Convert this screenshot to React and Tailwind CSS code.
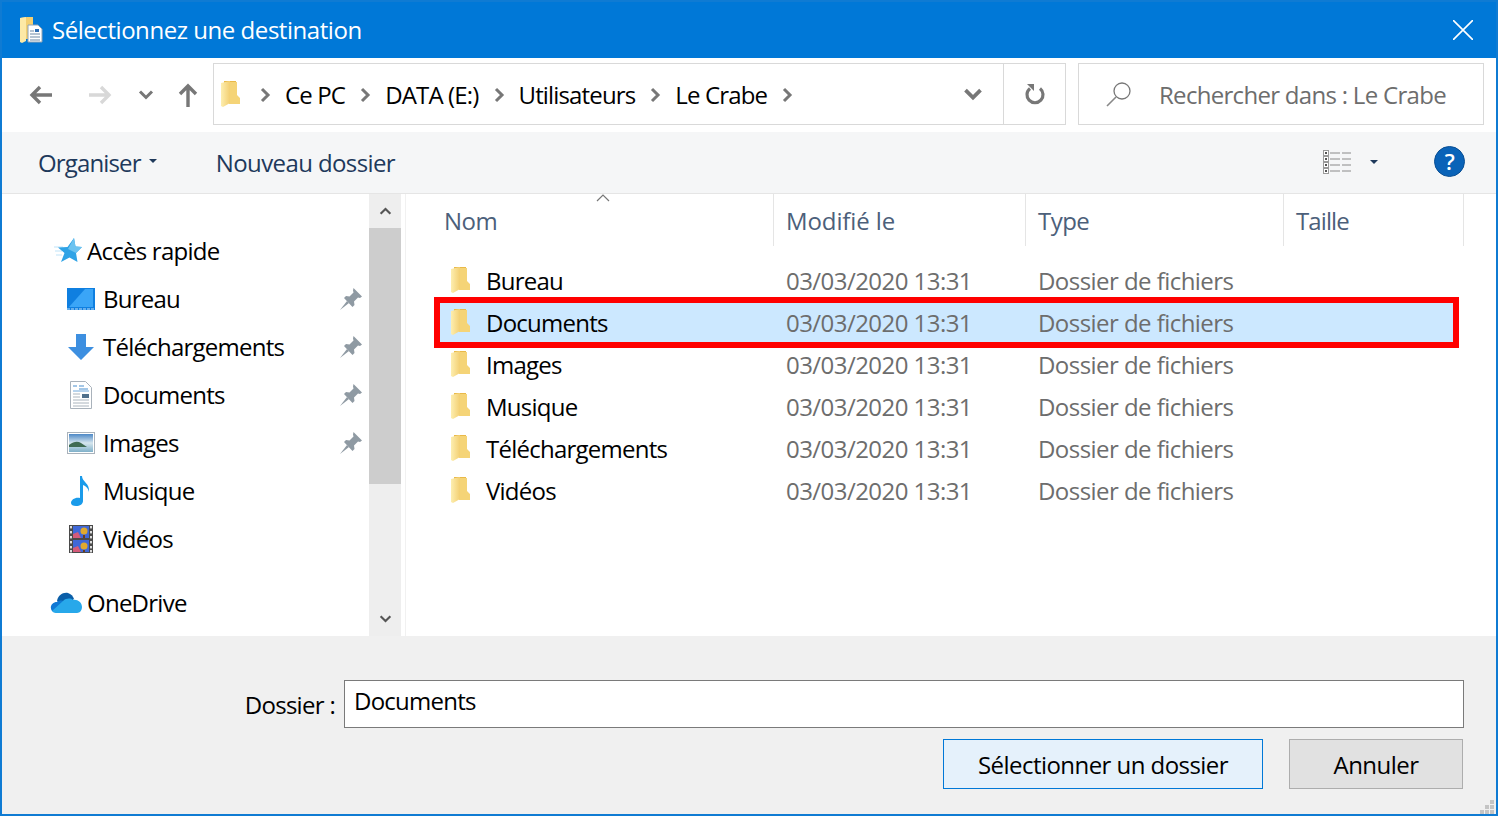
import { useId } from "react";

const font = { fontFamily: '"Open Sans", "Noto Sans", sans-serif' };

const quick = [
  { label: "Bureau", Icon: DesktopIcon, pin: true },
  { label: "Téléchargements", Icon: DownloadIcon, pin: true },
  { label: "Documents", Icon: DocIcon, pin: true },
  { label: "Images", Icon: PictureIcon, pin: true },
  { label: "Musique", Icon: NoteIcon },
  { label: "Vidéos", Icon: FilmIcon },
];

const folders = ["Bureau", "Documents", "Images", "Musique", "Téléchargements", "Vidéos"];
const crumbs = ["Ce PC", "DATA (E:)", "Utilisateurs", "Le Crabe"];

function FolderIcon({ className = "w-[22px] h-[28px]" }) {
  const id = useId();
  return (
    <svg viewBox="0 0 22 28" className={className}>
      <defs>
        <linearGradient id={id} x1="0" x2="1" y1="0" y2="0">
          <stop offset="0" stopColor="#fdeeb0" />
          <stop offset="1" stopColor="#f3cf72" />
        </linearGradient>
      </defs>
      <path d="M5 1h12v20H5z" fill="#e9b949" />
      <path d="M10 2h8v13l3 3v6H10z" fill="#f5d477" />
      <path d="M2 3l9-2v22l-7 4-2-1z" fill={`url(#${id})`} />
    </svg>
  );
}

function TitleIcon() {
  return (
    <svg viewBox="0 0 24 28" className="w-6 h-7">
      <path d="M1 2l7-1h6v22H4l-1 3-2-1z" fill="#f3cf72" />
      <path d="M1 2l6-1v24l-4 2-2-1z" fill="#fde9a6" />
      <path d="M9 9h10l4 4v13H9z" fill="#fff" stroke="#8fa2b3" />
      <path d="M11 15h4M11 18h10M11 21h10M11 24h10" stroke="#6f8aa5" strokeWidth="1.2" />
      <path d="M16 13h4v3h-4z" fill="#2f6fb5" />
    </svg>
  );
}

function ChevronGlyph({ className = "w-3 h-4" }) {
  return (
    <svg viewBox="0 0 12 16" className={className}>
      <path d="M3 2l6 6-6 6" fill="none" stroke="#777" strokeWidth="3" />
    </svg>
  );
}

function Arrow({ color, flip }) {
  return (
    <svg viewBox="0 0 24 20" className={`w-6 h-5 ${flip ? "-scale-x-100" : ""}`}>
      <path d="M11 2l-8 8 8 8M3 10h20" fill="none" stroke={color} strokeWidth="3.4" />
    </svg>
  );
}

function DownChevron({ className = "w-4 h-3", color = "#777", width = 3 }) {
  return (
    <svg viewBox="0 0 16 12" className={className}>
      <path d="M2 2.5l6 6 6-6" fill="none" stroke={color} strokeWidth={width} />
    </svg>
  );
}

function Caret({ color = "#1e395b" }) {
  return (
    <svg viewBox="0 0 8 4" className="w-2 h-1">
      <path d="M0 0h8L4 4z" fill={color} />
    </svg>
  );
}

function DetailsIcon() {
  return (
    <svg viewBox="0 0 28 26" className="w-7 h-[26px]">
      {[1, 7, 13, 19].map((y) => (
        <g key={y}>
          <rect x=".5" y={y + 0.5} width="5" height="5" fill="#fff" stroke="#9a9a9a" />
          <rect x="2" y={y + 2} width="2" height="2" fill="#555" />
          <path d={`M7 ${y + 3}h10M19 ${y + 3}h9`} stroke="#8a8a8a" strokeWidth="1" />
        </g>
      ))}
    </svg>
  );
}

function PinIcon() {
  return (
    <svg viewBox="0 0 22 22" className="w-[22px] h-[22px]">
      <path d="M13.5 0L22 8.5l-2 1.5-2-.5-4 4 .5 3.5-2 2L4 10l2-2 3.5.5 4-4-.5-2z" fill="#8f9aa3" />
      <path d="M7 13l-7 9 9-7z" fill="#8f9aa3" />
    </svg>
  );
}

function StarIcon() {
  return (
    <svg viewBox="0 0 28 26" className="w-7 h-[26px]">
      <path d="M0 9h9M1 13h7M2 17h6" stroke="#bfe3f8" strokeWidth="1" />
      <path d="M20 0l1.5 8.5L28 9l-6 6 1.5 9-8-4.5L7 24l3.5-9L4 9.5l9.5-.5z" fill="#2fa3e6" />
      <path d="M20 0l1.5 8.5L28 9l-6 6-8-4z" fill="#6cc3f0" />
    </svg>
  );
}

function DesktopIcon() {
  return (
    <svg viewBox="0 0 28 22" className="w-7 h-[22px]">
      <rect width="28" height="22" fill="#0f7fe0" />
      <path d="M2 19L18 1h8v18z" fill="#3aa5f7" />
      <path d="M0 21h28" stroke="#bfe0fa" strokeWidth="1" strokeDasharray="3 1" />
    </svg>
  );
}

function DownloadIcon() {
  return (
    <svg viewBox="0 0 26 26" className="w-[26px] h-[26px]">
      <path d="M8 0h10v13h8L13 26 0 13h8z" fill="#3d8fe0" />
    </svg>
  );
}

function DocIcon() {
  return (
    <svg viewBox="0 0 22 28" className="w-[22px] h-7">
      <path d="M.5.5h15l6 6v21H.5z" fill="#fff" stroke="#a9b2bb" />
      <path d="M3 5h4M9 5h5M9 8h9" stroke="#4a90d0" strokeWidth="1.2" />
      <path d="M3 10h16" stroke="#6fa8dc" strokeWidth="1" />
      <path d="M3 13h7M3 16h7M3 19h16M3 22h16M3 25h16" stroke="#aab4bd" strokeWidth="1" />
      <rect x="12" y="13" width="7" height="4" fill="#51718c" />
    </svg>
  );
}

function PictureIcon() {
  const id = useId();
  return (
    <svg viewBox="0 0 28 22" className="w-7 h-[22px]">
      <defs>
        <linearGradient id={id} x1="0" x2="0" y1="0" y2="1">
          <stop offset="0" stopColor="#4d88c6" />
          <stop offset=".5" stopColor="#d6e6ee" />
          <stop offset="1" stopColor="#7fb0c9" />
        </linearGradient>
      </defs>
      <rect x=".5" y=".5" width="27" height="21" fill="#fff" stroke="#a9b2bb" />
      <rect x="2" y="2" width="24" height="18" fill={`url(#${id})`} />
      <path d="M2 13c5-4 9-4 12-2l6 4H2z" fill="#3f6b52" />
    </svg>
  );
}

function NoteIcon() {
  return (
    <svg viewBox="0 0 20 30" className="w-5 h-[30px]">
      <path d="M9 0h2c0 6 8 7 7 16-1-4-3-6-6-7v16c0 3-3 5-7 5-3 0-5-1-5-3 0-3 4-6 9-5z" fill="#1a9bea" />
    </svg>
  );
}

function FilmIcon() {
  return (
    <svg viewBox="0 0 24 28" className="w-6 h-7">
      <rect width="24" height="28" fill="#4a4a4a" />
      {[1, 6, 11, 16, 21, 25].map((y) => (
        <g key={y}>
          <rect x="1" y={y} width="2" height="2.4" fill="#ddd" />
          <rect x="21" y={y} width="2" height="2.4" fill="#ddd" />
        </g>
      ))}
      <rect x="4" y="1" width="16" height="12" fill="#3f68d8" />
      <rect x="4" y="15" width="16" height="12" fill="#3f68d8" />
      <path d="M4 9l5-2 3 6H4zM4 23l5-2 3 6H4z" fill="#d45a7a" />
      <circle cx="15" cy="6" r="3.5" fill="#e0a92e" />
      <circle cx="15" cy="21" r="3.5" fill="#e0a92e" />
      <path d="M14 10h2v3h-2zM14 25h2v2h-2z" fill="#6b3a1e" />
    </svg>
  );
}

function CloudIcon() {
  return (
    <svg viewBox="0 0 32 22" className="w-8 h-[22px]">
      <path d="M7 9c1-6 6-9 11-8 3 1 5 3 6 6L14 15z" fill="#0a5ea8" />
      <path d="M2 19c-3-4 0-9 5-9 2-2 6-2 8 0l3 3-11 8z" fill="#0f78d4" />
      <path d="M13 9c3-3 8-3 10-1 4-1 9 2 9 7 0 3-2 6-5 6H6c-2 0-3-1-4-2z" fill="#28a8ea" />
    </svg>
  );
}

function RefreshIcon() {
  return (
    <svg viewBox="0 0 22 24" className="w-[22px] h-6">
      <path d="M6 6.5a8 8 0 1 0 10 0" fill="none" stroke="#777" strokeWidth="3.2" />
      <path d="M3 2h7v7z" fill="#777" />
    </svg>
  );
}

function SearchIcon() {
  return (
    <svg viewBox="0 0 26 26" className="w-[26px] h-[26px]">
      <circle cx="16" cy="10" r="8" fill="none" stroke="#777" strokeWidth="1.3" />
      <path d="M10 16L1 25" stroke="#888" strokeWidth="1.6" />
    </svg>
  );
}

function Crumb({ label }) {
  return (
    <>
      <span>{label}</span>
      <ChevronGlyph className="w-[12px] h-4" />
    </>
  );
}

function TopBar() {
  return (
    <div className="h-[74px] bg-white flex items-center shrink-0">
      <div className="w-[211px] flex items-center shrink-0 pl-[27px]">
        <Arrow color="#777" />
        <div className="ml-[35px]">
          <Arrow color="#d8d8d8" flip />
        </div>
        <div className="ml-[26px]">
          <DownChevron />
        </div>
        <svg viewBox="0 0 20 24" className="w-5 h-6 ml-[24px]">
          <path d="M2 11l8-8 8 8M10 3v21" fill="none" stroke="#777" strokeWidth="3.4" />
        </svg>
      </div>
      <div className="h-[62px] w-[853px] mb-[2px] border border-[#d9d9d9] flex items-center shrink-0">
        <div className="ml-[5px] mr-[18px]">
          <FolderIcon />
        </div>
        <div className="flex-1 flex items-center gap-[14px] text-[24px] text-black tracking-[-0.85px] pt-[2px]">
          <ChevronGlyph className="w-[12px] h-4" />
          {crumbs.map((c) => (
            <Crumb key={c} label={c} />
          ))}
        </div>
        <div className="w-[61px] h-full flex items-center justify-center">
          <DownChevron className="w-[20px] h-[15px]" />
        </div>
        <div className="w-[62px] h-full border-l border-[#d9d9d9] flex items-center justify-center">
          <RefreshIcon />
        </div>
      </div>
      <div className="h-[62px] w-[406px] ml-3 mb-[2px] border border-[#d9d9d9] flex items-center shrink-0 pl-[27px] text-[24px] text-[#6d6d6d] tracking-[-0.7px]">
        <SearchIcon />
        <span className="ml-[27px] pt-[2px]">Rechercher dans : Le Crabe</span>
      </div>
    </div>
  );
}

function CommandBar() {
  return (
    <div className="h-[62px] bg-[#f5f6f7] border-b border-[#e5e5e5] flex items-center text-[24px] text-[#1e395b] tracking-[-0.6px] shrink-0 pl-[36px] pr-[31px]">
      <span className="tracking-[-0.85px]">Organiser</span>
      <span className="ml-2 mb-1 flex">
        <Caret />
      </span>
      <span className="ml-[59px]">Nouveau dossier</span>
      <div className="ml-auto mb-[2px] flex items-center">
        <DetailsIcon />
        <span className="ml-[19px] mr-[56px] flex">
          <Caret />
        </span>
        <div className="w-[31px] h-[31px] rounded-full bg-[#0a63b8] border border-[#0a4f94] text-white text-[22px] font-semibold flex items-center justify-center">
          ?
        </div>
      </div>
    </div>
  );
}

function Sidebar() {
  return (
    <div className="w-[367px] pt-[33px] text-[24px] text-black tracking-[-0.75px] shrink-0 overflow-hidden">
      <div className="h-12 flex items-center pl-[52px] gap-[5px]">
        <div className="w-[28px] flex justify-center">
          <StarIcon />
        </div>
        <span>Accès rapide</span>
      </div>
      {quick.map(({ label, Icon, pin }) => (
        <div key={label} className="h-12 flex items-center pl-[65px] pr-[7px]">
          <div className="w-[28px] flex justify-center shrink-0">
            <Icon />
          </div>
          <span className="ml-[8px]">{label}</span>
          {pin && (
            <span className="ml-auto flex">
              <PinIcon />
            </span>
          )}
        </div>
      ))}
      <div className="h-12 mt-4 flex items-center pl-[48px] gap-[5px]">
        <CloudIcon />
        <span>OneDrive</span>
      </div>
    </div>
  );
}

function Scrollbar() {
  return (
    <div className="w-8 bg-[#eeeeee] flex flex-col shrink-0">
      <div className="h-[34px] flex items-center justify-center">
        <DownChevron className="w-[13px] h-[10px] rotate-180" color="#555" width={2.6} />
      </div>
      <div className="h-[256px] bg-[#cdcdcd]" />
      <div className="flex-1" />
      <div className="h-[34px] flex items-center justify-center">
        <DownChevron className="w-[13px] h-[10px]" color="#555" width={2.6} />
      </div>
    </div>
  );
}

function FileList() {
  const cols = "grid grid-cols-[340px_252px_258px_180px]";
  return (
    <div className="flex-1 min-w-0 ml-[4px] border-l border-[#f1f1f1] tracking-[-0.55px] text-[24px]">
      <div className={`${cols} h-[52px] ml-[28px] text-[#4c607a] relative`}>
        <div className="pl-[10px] pt-[9px] border-r border-[#e5e5e5]">
          Nom
          <svg viewBox="0 0 14 8" className="absolute left-[162px] top-0 w-[14px] h-2">
            <path d="M1 7l6-6 6 6" fill="none" stroke="#777" strokeWidth="1.2" />
          </svg>
        </div>
        <div className="pl-[12px] pt-[9px] border-r border-[#e5e5e5] tracking-[-0.1px]">Modifié le</div>
        <div className="pl-[12px] pt-[9px] border-r border-[#e5e5e5]">Type</div>
        <div className="pl-[12px] pt-[9px] border-r border-[#e5e5e5] tracking-[-0.9px]">Taille</div>
      </div>
      <div className="pt-[13px] ml-[34px] mr-[38px]">
        {folders.map((name) => {
          const selected = name === "Documents";
          return (
            <div
              key={name}
              className={`grid grid-cols-[334px_252px_1fr] h-[42px] items-center relative ${selected ? "bg-[#cce8ff]" : ""}`}
            >
              {selected && (
                <div className="absolute left-[-6px] right-[-1px] top-[-4px] bottom-[-5px] border-[6px] border-[#ff0000]" />
              )}
              <div className="flex items-center pl-[9px] text-black">
                <FolderIcon />
                <span className="ml-[15px] pt-[2px] tracking-[-0.75px]">{name}</span>
              </div>
              <div className="pl-[12px] pt-[2px] text-[#6d6d6d]">03/03/2020 13:31</div>
              <div className="pl-[12px] pt-[2px] text-[#6d6d6d]">Dossier de fichiers</div>
            </div>
          );
        })}
      </div>
    </div>
  );
}

function Footer() {
  return (
    <div className="flex-1 bg-[#f0f0f0] relative text-[24px] text-black tracking-[-0.55px] flex flex-col pt-[44px] pr-[32px]">
      <div className="flex items-start justify-end">
        <span className="mt-[7px] mr-[9px] tracking-[-0.7px]">Dossier :</span>
        <div className="w-[1120px] h-[48px] bg-white border border-[#7a7a7a] pl-[9px] leading-[40px] tracking-[-0.75px]">
          Documents
        </div>
      </div>
      <div className="flex justify-end gap-[26px] mt-[11px] mr-px">
        <button className="w-[320px] h-[50px] pt-[2px] bg-[#e5f1fb] border border-[#0078d7] tracking-[-0.55px]">
          Sélectionner un dossier
        </button>
        <button className="w-[174px] h-[50px] pt-[2px] bg-[#e1e1e1] border border-[#adadad] tracking-[-0.55px]">
          Annuler
        </button>
      </div>
      <svg viewBox="0 0 16 16" className="absolute right-0 bottom-0 w-4 h-4">
        <path d="M10 2h4v4h-4zM5 7h4v4H5zM10 7h4v4h-4zM0 12h4v4H0zM5 12h4v4H5zM10 12h4v4h-4z" fill="#c4c4c4" />
      </svg>
    </div>
  );
}

export default function App() {
  return (
    <div
      style={font}
      className="w-[1498px] h-[816px] border-2 border-[#0f7bd3] flex flex-col overflow-hidden bg-white"
    >
      <div className="h-14 bg-[#0078d7] flex items-center pl-[17px] pr-[23px] text-white text-[24px] tracking-[-0.45px] shrink-0">
        <TitleIcon />
        <span className="ml-[9px]">Sélectionnez une destination</span>
        <svg viewBox="0 0 20 20" className="ml-auto w-5 h-5">
          <path d="M0 0l20 20M20 0L0 20" stroke="#fff" strokeWidth="1.6" />
        </svg>
      </div>
      <TopBar />
      <CommandBar />
      <div className="h-[442px] flex shrink-0">
        <Sidebar />
        <Scrollbar />
        <FileList />
      </div>
      <Footer />
    </div>
  );
}
